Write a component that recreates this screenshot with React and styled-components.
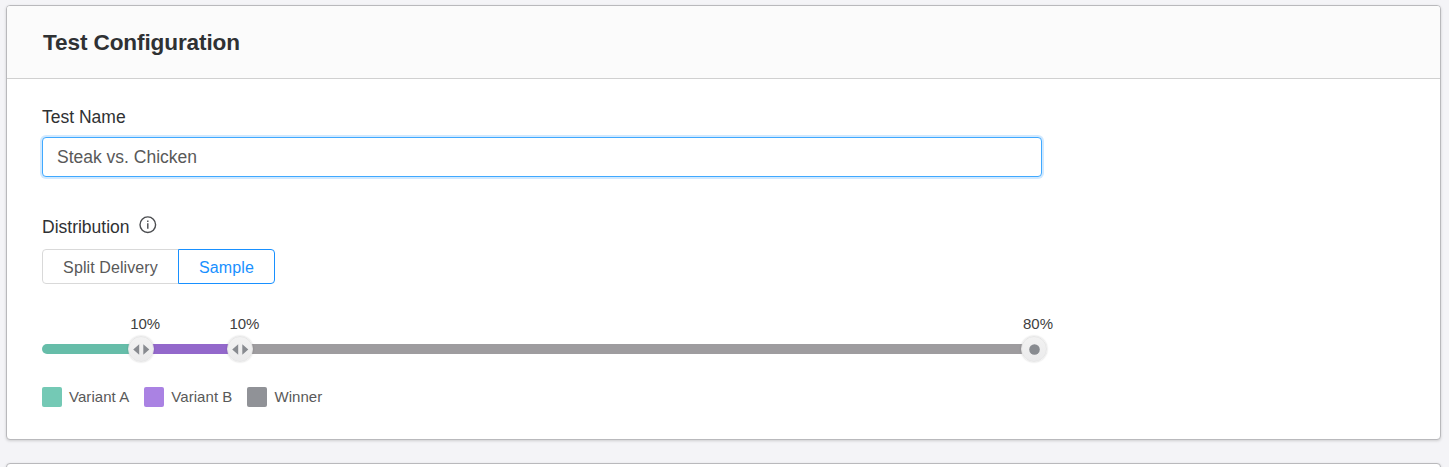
import { useState } from 'react';
import styled, { createGlobalStyle } from 'styled-components';

const GlobalStyle = createGlobalStyle`
    * {
        box-sizing: border-box;
    }

    body {
        margin: 0;
        background-color: #F4F4F7;
        font-family: "Liberation Sans", Arial, sans-serif;
        color: #2F3133;
        overflow: hidden;
    }
`

const Page = styled.div`
    height: 467px;
    padding: 5px 8px 0 6px;
    display: flex;
    flex-direction: column;
    gap: 23px;
    overflow: hidden;
`

const Card = styled.div`
    flex: none;
    height: 435px;
    border: 1px solid #B9B9BC;
    border-radius: 4px;
    background-color: #FFFFFF;
    box-shadow: 0 1px 3px rgba(0, 0, 0, 0.16);
    overflow: hidden;
`

const CardHeader = styled.div`
    height: 73px;
    padding: 1px 36px 0;
    display: flex;
    align-items: center;
    background-color: #FBFBFB;
    border-bottom: 1px solid #D0D0D0;
`

const CardTitle = styled.h2`
    margin: 0;
    font-size: 22.6px;
    line-height: 29px;
    font-weight: bold;
    letter-spacing: -0.12px;
`

const CardBody = styled.div`
    padding: 26px 35px 0;
`

const Label = styled.label`
    display: flex;
    align-items: center;
    height: 24px;
    font-size: 17.5px;
    line-height: 24px;
`

const NameInput = styled.input`
    display: block;
    width: 1000px;
    height: 40px;
    margin: 8px 0 38px;
    padding: 0 14px;
    border: 1px solid #40A9FF;
    border-radius: 4px;
    outline: none;
    box-shadow: 0 0 0 2px rgba(24, 144, 255, 0.2);
    color: #595959;
    font-family: inherit;
    font-size: 17.5px;
`

const InfoIcon = styled.svg`
    width: 18px;
    height: 18px;
    margin: -4px 0 0 9px;
`

const ButtonGroup = styled.div`
    display: flex;
    margin-top: 10px;
`

const ModeButton = styled.button`
    width: ${props => props.$width}px;
    height: 35px;
    padding: 2px 0 0;
    margin-left: ${props => props.$last ? '-1px' : '0'};
    border: 1px solid ${props => props.$active ? '#1890FF' : '#D9D9D9'};
    border-radius: ${props => props.$last ? '0 4px 4px 0' : '4px 0 0 4px'};
    background-color: #FFFFFF;
    color: ${props => props.$active ? '#1890FF' : '#595959'};
    font-family: inherit;
    font-size: 16px;
    letter-spacing: 0.1px;
    position: relative;
    z-index: ${props => props.$active ? 1 : 0};
    cursor: pointer;
`

const Slider = styled.div`
    position: relative;
    width: 992px;
    margin-top: 60px;
`

const Track = styled.div`
    display: flex;
    height: 10px;
    border-radius: 5px 0 0 5px;
    overflow: hidden;
`

const Segment = styled.div`
    background-color: ${props => props.$color};
`

const Stop = styled.div`
    position: absolute;
    top: -30px;
    width: 60px;
    margin-left: -30px;
    display: flex;
    flex-direction: column;
    align-items: center;
`

const StopLabel = styled.div`
    height: 20px;
    padding-left: 8px;
    color: #404040;
    font-size: 15px;
    line-height: 20px;
`

const Handle = styled.svg`
    width: 26px;
    height: 26px;
    margin-top: 2px;
    border-radius: 50%;
    background: linear-gradient(#F2F2F2, #EBEBEC);
    border: 1px solid #E6E6E6;
    box-shadow: 0 0 2px rgba(0, 0, 0, 0.2);
`

const Legend = styled.div`
    display: flex;
    gap: 15px;
    margin-top: 33px;
`

const LegendItem = styled.div`
    display: flex;
    align-items: center;
    gap: 7px;
    color: #595959;
    font-size: 15px;
    line-height: 20px;
    letter-spacing: 0.06px;
`

const Swatch = styled.div`
    width: 20px;
    height: 20px;
    border-radius: 2px;
    background-color: ${props => props.$color};
`

const variants = [
    { name: "Variant A", share: 10, track: "#66BDA9", color: "#74C9B5" },
    { name: "Variant B", share: 10, track: "#9368CB", color: "#AA82E3" },
    { name: "Winner", share: 80, track: "#9E9C9F", color: "#909297" },
];

function SliderStop(props) {
    return (
        <Stop style={{ left: props.position + "%" }}>
            <StopLabel>{props.share}%</StopLabel>
            <Handle viewBox="0 0 24 24" fill="#888B90">
                {props.fixed
                    ? <circle cx="12.5" cy="12.5" r="5.3" />
                    : <path d="M10.2 7.2v10.6l-6-5.3zM14.3 7.2v10.6l6-5.3z" />}
            </Handle>
        </Stop>
    )
}

function App() {
    const [testName, setTestName] = useState("Steak vs. Chicken");
    const [mode, setMode] = useState("sample");

    let total = 0;
    const stops = variants.map((variant) => {
        total += variant.share;
        return { ...variant, position: total };
    });

    return (
        <>
            <GlobalStyle />
            <Page>
                <Card>
                    <CardHeader>
                        <CardTitle>Test Configuration</CardTitle>
                    </CardHeader>
                    <CardBody>
                        <Label htmlFor="testName">Test Name</Label>
                        <NameInput
                            id="testName"
                            value={testName}
                            onChange={event => setTestName(event.target.value)}
                        />
                        <Label as="div">
                            Distribution
                            <InfoIcon viewBox="0 0 18 18" fill="none" stroke="#4B4D50">
                                <circle cx="8.8" cy="8.7" r="7.8" strokeWidth="1.4" />
                                <path d="M8.8 7.2v5.5M8.8 4.5v1.4" strokeWidth="1.4" />
                            </InfoIcon>
                        </Label>
                        <ButtonGroup>
                            <ModeButton $width={137} $active={mode === "split"} onClick={() => setMode("split")}>
                                Split Delivery
                            </ModeButton>
                            <ModeButton $last $width={97} $active={mode === "sample"} onClick={() => setMode("sample")}>
                                Sample
                            </ModeButton>
                        </ButtonGroup>
                        <Slider>
                            <Track>
                                {stops.map((stop) => (
                                    <Segment key={stop.name} $color={stop.track} style={{ width: stop.share + "%" }} />
                                ))}
                            </Track>
                            {stops.map((stop) => (
                                <SliderStop
                                    key={stop.name}
                                    share={stop.share}
                                    position={stop.position}
                                    fixed={stop.position === 100}
                                />
                            ))}
                        </Slider>
                        <Legend>
                            {variants.map((variant) => (
                                <LegendItem key={variant.name}>
                                    <Swatch $color={variant.color} />
                                    {variant.name}
                                </LegendItem>
                            ))}
                        </Legend>
                    </CardBody>
                </Card>
                <Card />
            </Page>
        </>
    )
}

export default App;
